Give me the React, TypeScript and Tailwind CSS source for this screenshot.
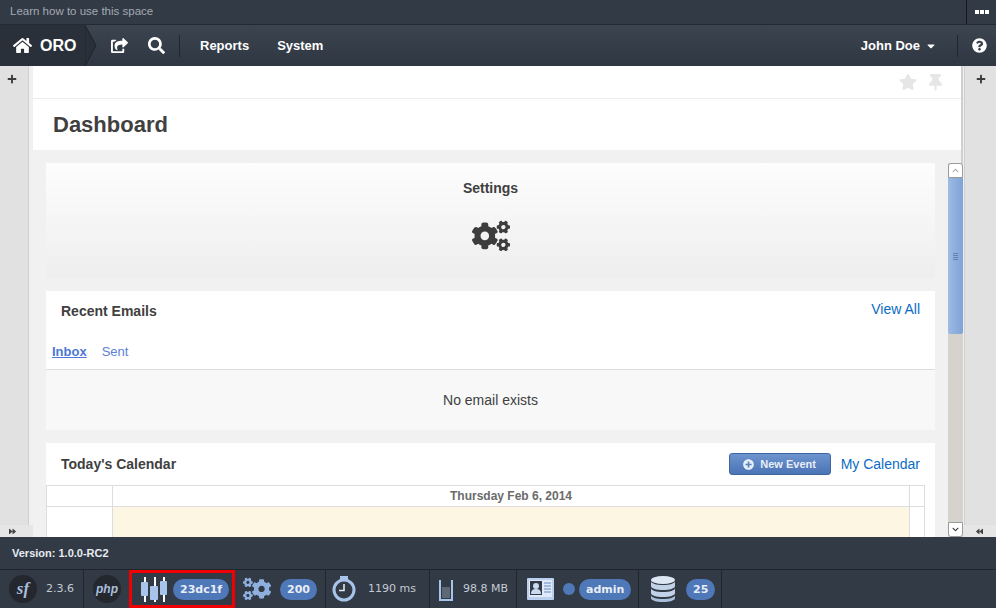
import {
  FaBackward,
  FaCaretDown,
  FaChevronDown,
  FaChevronUp,
  FaCogs,
  FaForward,
  FaHome,
  FaPlus,
  FaPlusCircle,
  FaQuestionCircle,
  FaSearch,
  FaShareSquare,
  FaStar,
  FaThumbtack,
} from "react-icons/fa";

function Badge({ children }: { children: string }) {
  return (
    <span className="flex h-[21px] items-center rounded-full bg-[#4f78b8] px-[7px] font-['DejaVu_Sans'] text-[11px] font-bold leading-none text-[#e8edf5]">
      {children}
    </span>
  );
}

function SideRail({ side }: { side: "left" | "right" }) {
  const isLeft = side === "left";
  return (
    <aside
      className={`flex w-[33px] shrink-0 flex-col bg-[#f0f0f0] ${isLeft ? "" : "w-[30px]"}`}
    >
      <div className={`flex h-[459px] flex-col items-center bg-[#e1e1e1] pt-[8px] ${isLeft ? "mr-[4px] border-r border-[#cfcfcf]" : "ml-[1px] border-l border-[#cfcfcf]"}`}>
        <FaPlus className={`text-[10px] text-[#3c3c3c] ${isLeft ? "mr-[5px]" : ""}`} />
      </div>
      <div className="flex flex-1 items-center justify-center bg-[#e6e6e6]">
        {isLeft ? (
          <FaForward className="mr-[8px] text-[7px] text-[#444]" />
        ) : (
          <FaBackward className="text-[7px] text-[#444]" />
        )}
      </div>
    </aside>
  );
}

function Scrollbar() {
  return (
    <div className="ml-[13px] flex w-[15px] shrink-0 flex-col bg-[#d6d3cf]">
      <div className="flex h-[15px] items-center justify-center rounded-t-[3px] border border-[#9a9a9a] bg-white">
        <FaChevronUp className="text-[7px] text-[#aaa]" />
      </div>
      <div className="flex h-[156px] items-center justify-center rounded-b-[2px] bg-gradient-to-r from-[#9dbbe4] to-[#7ea3d6]">
        <span className="h-[7px] w-[5px] border-y-[3px] border-double border-[#5f83b8]" />
      </div>
      <div className="flex-1" />
      <div className="flex h-[15px] items-center justify-center rounded-b-[3px] border border-[#9a9a9a] bg-white">
        <FaChevronDown className="text-[7px] text-[#333]" />
      </div>
    </div>
  );
}

function ToolbarCell({ children, className = "" }: { children: React.ReactNode; className?: string }) {
  return (
    <div className={`flex h-full items-center border-r border-[#1f252c] ${className}`}>{children}</div>
  );
}

function BarsIcon() {
  return (
    <svg width="28" height="25" viewBox="0 0 28 25">
      <g fill="#fff">
        <rect x="4" y="0" width="2" height="25" />
        <rect x="14" y="0" width="2" height="25" />
        <rect x="23" y="0" width="2" height="25" />
      </g>
      <rect x="1" y="5" width="7" height="14" rx="1" fill="#a9c4ea" />
      <rect x="10" y="9" width="8" height="14" rx="1" fill="#a9c4ea" />
      <rect x="20" y="4" width="7" height="14" rx="1" fill="#a9c4ea" />
    </svg>
  );
}

function TimerIcon() {
  return (
    <svg width="24" height="26" viewBox="0 0 24 26">
      <rect x="8" y="0" width="8" height="3" fill="#a9c4ea" />
      <circle cx="12" cy="14" r="10" fill="none" stroke="#a9c4ea" strokeWidth="3" />
      <path d="M12 8v6.5H7" fill="none" stroke="#dfe8f5" strokeWidth="1.6" />
    </svg>
  );
}

function MemoryIcon() {
  return (
    <svg width="14" height="24" viewBox="0 0 14 24">
      <path d="M1 3v20h12V3" fill="none" stroke="#a9c4ea" strokeWidth="2" />
      <rect x="3" y="10" width="8" height="11" fill="#5d6874" />
    </svg>
  );
}

function IdCardIcon() {
  return (
    <svg width="27" height="25" viewBox="0 0 27 25">
      <rect x="0" y="1" width="27" height="22" rx="1" fill="#b9cfee" />
      <rect x="2" y="3" width="23" height="17" fill="#dfe9f7" />
      <rect x="3" y="4" width="12" height="14" fill="#313a45" />
      <circle cx="9" cy="9" r="3" fill="#c9d9ef" />
      <path d="M4 17c0-4 2-5 5-5s5 1 5 5z" fill="#c9d9ef" />
      <path d="M17 6h7M17 9h7M17 12h7M17 15h7" stroke="#8fabd3" strokeWidth="1.4" />
    </svg>
  );
}

function DatabaseIcon() {
  return (
    <svg width="24" height="26" viewBox="0 0 24 26">
      <path d="M0 19v3c0 2.500 5.400 4 12 4s12-1.500 12-4v-3c0 2.500-5.400 4-12 4S0 21.500 0 19z" fill="#a9bfdc" />
      <path d="M0 12v5c0 2.500 5.400 4 12 4s12-1.500 12-4v-5c0 2.500-5.400 4-12 4S0 14.500 0 12z" fill="#c1d2e8" />
      <path d="M0 5v5c0 2.500 5.400 4 12 4s12-1.500 12-4V5c0 2.500-5.400 4-12 4S0 7.500 0 5z" fill="#c1d2e8" />
      <ellipse cx="12" cy="4" rx="12" ry="4" fill="#dde7f4" />
    </svg>
  );
}

function GearsIcon() {
  return <FaCogs className="-scale-x-100 text-[28px] text-[#8fb0de]" />;
}

export default function App() {
  return (
    <div className="flex h-[608px] w-[996px] flex-col overflow-hidden bg-white font-['Liberation_Sans',Arial,sans-serif]">
      {/* pinned bar */}
      <div className="flex h-[25px] shrink-0 items-center justify-between border-b border-[#242a32] bg-[#323a46]">
        <span className="pl-[10px] text-[11.5px] text-[#a3a9b1]">Learn how to use this space</span>
        <div className="flex h-full w-[30px] items-center justify-center gap-[1px] border-l border-[#15191e]">
          <span className="h-[4px] w-[4px] bg-white" />
          <span className="h-[4px] w-[4px] bg-white" />
          <span className="h-[4px] w-[4px] bg-white" />
        </div>
      </div>

      {/* main nav */}
      <nav className="flex h-[41px] shrink-0 items-center bg-gradient-to-b from-[#3b444f] to-[#2f3742] text-white">
        <div className="relative flex h-full w-[85px] items-center bg-[#2a3039] pl-[13px]">
          <FaHome className="text-[19px]" />
          <span className="ml-[8px] text-[16px] font-bold">ORO</span>
          <svg className="absolute left-[85px] top-0" width="12" height="41" viewBox="0 0 12 41">
            <path d="M0 0l11 20.500L0 41z" fill="#2a3039" stroke="#1f242b" strokeWidth="1" />
          </svg>
        </div>
        <FaShareSquare className="ml-[26px] text-[17px]" />
        <FaSearch className="ml-[20px] text-[17px]" />
        <span className="ml-[14px] h-[22px] w-px bg-[#20262d]" />
        <span className="ml-[20px] text-[13px] font-bold">Reports</span>
        <span className="ml-[28px] text-[13px] font-bold">System</span>
        <span className="ml-auto text-[13px] font-bold">John Doe</span>
        <FaCaretDown className="ml-[5px] text-[12px]" />
        <span className="ml-[20px] h-[22px] w-px bg-[#20262d]" />
        <FaQuestionCircle className="ml-[14px] mr-[9px] text-[15px]" />
      </nav>

      <div className="flex h-[471px] shrink-0">
        <SideRail side="left" />
        <main className="flex min-w-0 flex-1 flex-col border-r-2 border-[#cfcfcf]">
          <div className="flex h-[33px] shrink-0 items-center justify-end gap-[10px] border-b border-[#ececec] pr-[17px] text-[#e6e6e6]">
            <FaStar className="text-[18px]" />
            <FaThumbtack className="text-[17px]" />
          </div>
          <div className="flex h-[51px] shrink-0 items-center pl-[20px] text-[22px] font-bold text-[#404040]">
            Dashboard
          </div>
          <div className="flex min-h-0 flex-1 bg-[#f1f1f1] pl-[13px] pt-[13px]">
            <div className="flex w-[889px] shrink-0 flex-col gap-[13px]">
              <section className="flex h-[115px] shrink-0 flex-col items-center bg-gradient-to-b from-[#fdfdfd] to-[#eeeeee] pt-[17px]">
                <h3 className="text-[14px] font-bold leading-4 text-[#404040]">Settings</h3>
                <FaCogs className="mt-[21px] text-[38px] text-[#3d3d3d]" />
              </section>

              <section className="h-[139px] shrink-0 bg-white">
                <div className="flex h-[44px] items-start justify-between pl-[15px] pr-[15px] pt-[12px]">
                  <h3 className="text-[14px] font-bold leading-4 text-[#404040]">Recent Emails</h3>
                  <a className="-mt-[2px] text-[14px] leading-4 text-[#0a6cc4]">View All</a>
                </div>
                <div className="flex h-[35px] items-center gap-[15px] border-b border-[#dddddd] pl-[6px]">
                  <a className="text-[13px] font-bold leading-4 text-[#4d78d4] underline">Inbox</a>
                  <a className="text-[13px] leading-4 text-[#5b82d6]">Sent</a>
                </div>
                <div className="flex h-[60px] items-center justify-center bg-[#f8f8f8] text-[14px] text-[#404040]">
                  No email exists
                </div>
              </section>

              <section className="flex-1 bg-white">
                <div className="flex h-[42px] items-center justify-between pl-[15px] pr-[15px]">
                  <h3 className="text-[14px] font-bold text-[#404040]">Today's Calendar</h3>
                  <div className="flex items-center gap-[10px]">
                    <button className="flex h-[22px] w-[102px] items-center justify-center gap-[6px] rounded-[3px] border border-[#3f659f] bg-gradient-to-b from-[#6d94cf] to-[#4b74b5] text-[11px] font-bold text-[#e8eef8]">
                      <FaPlusCircle className="text-[11px]" />
                      New Event
                    </button>
                    <a className="text-[14px] text-[#0a6cc4]">My Calendar</a>
                  </div>
                </div>
                <div className="ml-0 grid w-[879px] grid-cols-[66px_1fr_14px] border-l border-t border-r border-[#dddddd]">
                  <div className="h-[21px] border-b border-r border-[#dddddd]" />
                  <div className="flex h-[21px] items-center justify-center border-b border-r border-[#dddddd] text-[12px] font-bold text-[#6b6b6b]">
                    Thursday Feb 6, 2014
                  </div>
                  <div className="h-[21px] border-b border-[#dddddd]" />
                  <div className="h-[40px] border-r border-[#dddddd]" />
                  <div className="h-[40px] border-r border-[#dddddd] bg-[#fdf6e3]" />
                  <div className="h-[40px]" />
                </div>
              </section>
            </div>
            <Scrollbar />
          </div>
        </main>
        <SideRail side="right" />
      </div>

      {/* debug bar */}
      <footer className="flex min-h-0 flex-1 flex-col bg-[#323a46]">
        <div className="flex h-[33px] shrink-0 items-center border-b border-[#1f252c] pl-[12px] text-[11px] font-bold text-[#e8ecf1]">
          Version: 1.0.0-RC2
        </div>
        <div className="flex min-h-0 flex-1 font-['DejaVu_Sans',sans-serif] text-[11px] text-[#c3cad3]">
          <ToolbarCell className="w-[84px] pl-[9px]">
            <span className="flex h-[28px] w-[28px] items-center justify-center rounded-full bg-[#24282e] font-['Liberation_Serif',serif] text-[17px] font-bold italic text-[#a9bfdc]">
              sf
            </span>
            <span className="ml-[9px]">2.3.6</span>
          </ToolbarCell>
          <div className="flex h-full w-[45px] items-center pl-[9px]">
            <span className="flex h-[28px] w-[28px] items-center justify-center rounded-full bg-[#24282e] font-['Liberation_Sans',sans-serif] text-[12px] font-bold italic text-[#a9bfdc]">
              php
            </span>
          </div>
          <div className="flex h-full w-[106px] items-center border-[3px] border-[#f00000] pl-[8px]">
            <BarsIcon />
            <span className="ml-[5px]">
              <Badge>23dc1f</Badge>
            </span>
          </div>
          <ToolbarCell className="w-[91px] pl-[8px]">
            <GearsIcon />
            <span className="ml-[9px]">
              <Badge>200</Badge>
            </span>
          </ToolbarCell>
          <ToolbarCell className="w-[104px] pl-[6px]">
            <TimerIcon />
            <span className="ml-[12px]">1190 ms</span>
          </ToolbarCell>
          <ToolbarCell className="w-[87px] pl-[9px]">
            <MemoryIcon />
            <span className="ml-[10px]">98.8 MB</span>
          </ToolbarCell>
          <ToolbarCell className="w-[122px] pl-[10px]">
            <IdCardIcon />
            <span className="ml-[9px] mr-[4px] h-[12px] w-[12px] rounded-full bg-[#4f78b8]" />
            <Badge>admin</Badge>
          </ToolbarCell>
          <ToolbarCell className="w-[83px] pl-[12px]">
            <DatabaseIcon />
            <span className="ml-[11px]">
              <Badge>25</Badge>
            </span>
          </ToolbarCell>
        </div>
      </footer>
    </div>
  );
}
